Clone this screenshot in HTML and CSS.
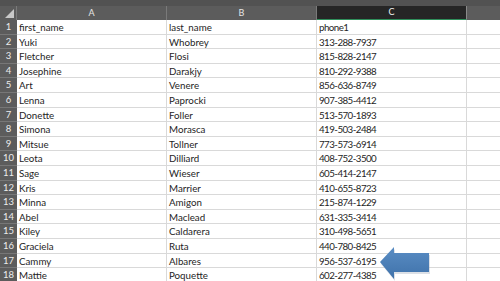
FILE: index.html
```html
<!DOCTYPE html>
<html lang="en">
<head>
  <meta charset="UTF-8" />
  <title>Contacts sheet</title>
  <link rel="stylesheet" href="styles.css">
</head>
<body>
  <div class="sheet">
    <div class="topbar"></div>
    <div class="grid" id="grid">
      <div class="corner"><span class="tri"></span></div>
      <div class="col-head">A</div>
      <div class="col-head">B</div>
      <div class="col-head selected">C</div>
      <div class="col-head last"></div>
    </div>

    <svg class="arrow" width="60" height="40" viewBox="0 0 60 40">
      <defs>
        <linearGradient id="arrowFill" x1="0" y1="0" x2="0" y2="1">
          <stop offset="0" stop-color="#5a8dc4" />
          <stop offset="1" stop-color="#3f72aa" />
        </linearGradient>
      </defs>
      <polygon points="2,16 16,1 16,7 51,7 51,26 16,26 16,33" fill="#9aa7b6" opacity="0.35" transform="translate(1,2)" />
      <polygon points="2,16 16,1 16,7 51,7 51,26 16,26 16,33" fill="url(#arrowFill)" />
    </svg>
  </div>

  <script>
    const rows = [
      ['first_name', 'last_name', 'phone1'],
      ['Yuki', 'Whobrey', '313-288-7937'],
      ['Fletcher', 'Flosi', '815-828-2147'],
      ['Josephine', 'Darakjy', '810-292-9388'],
      ['Art', 'Venere', '856-636-8749'],
      ['Lenna', 'Paprocki', '907-385-4412'],
      ['Donette', 'Foller', '513-570-1893'],
      ['Simona', 'Morasca', '419-503-2484'],
      ['Mitsue', 'Tollner', '773-573-6914'],
      ['Leota', 'Dilliard', '408-752-3500'],
      ['Sage', 'Wieser', '605-414-2147'],
      ['Kris', 'Marrier', '410-655-8723'],
      ['Minna', 'Amigon', '215-874-1229'],
      ['Abel', 'Maclead', '631-335-3414'],
      ['Kiley', 'Caldarera', '310-498-5651'],
      ['Graciela', 'Ruta', '440-780-8425'],
      ['Cammy', 'Albares', '956-537-6195'],
      ['Mattie', 'Poquette', '602-277-4385']
    ];

    const grid = document.getElementById('grid');
    rows.forEach((row, index) => {
      let html = `<div class="row-head">${index + 1}</div>`;
      html += `<div class="cell">${row[0]}</div>`;
      html += `<div class="cell">${row[1]}</div>`;
      html += `<div class="cell phone">${row[2]}</div>`;
      html += `<div class="cell last"></div>`;
      grid.insertAdjacentHTML('beforeend', html);
    });
  </script>
</body>
</html>
```

FILE: styles.css
```css
body {
  margin: 0;
  background: #ffffff;
  font-family: Lato, "Open Sans", sans-serif;
}
.sheet {
  position: relative;
  width: 500px;
  height: 281px;
  overflow: hidden;
}
.topbar {
  height: 6px;
  background: #525252;
}
.grid {
  display: grid;
  grid-template-columns: 17px 150px 150px 150px 1fr;
  grid-auto-rows: 14.6px;
  grid-template-rows: 14px;
}
.corner {
  position: relative;
  background: #5c5c5c;
  border-right: 1px solid #7a7a7a;
}
.tri {
  position: absolute;
  right: 2px;
  bottom: 2px;
  width: 0;
  height: 0;
  border-left: 9px solid transparent;
  border-bottom: 9px solid #c8c8c8;
}
.col-head {
  background: #5c5c5c;
  color: #e6e6e6;
  font-size: 9px;
  text-align: center;
  line-height: 13px;
  border-right: 1px solid #7a7a7a;
}
.col-head.selected {
  background: #262626;
  color: #f0f0f0;
  border-bottom: 1px solid #2f8f5b;
  line-height: 12px;
  border-right: 1px solid #8a8a8a;
}
.col-head.last {
  border-right: none;
}
.row-head {
  background: #5c5c5c;
  color: #ececec;
  font-size: 9.5px;
  text-align: center;
  line-height: 14px;
  border-bottom: 1px solid #777777;
  box-sizing: border-box;
}
.cell {
  font-size: 9.75px;
  color: #1e1e1e;
  padding-left: 2px;
  line-height: 14px;
  white-space: nowrap;
  overflow: hidden;
  border-right: 1px solid #d9d9d9;
  border-bottom: 1px solid #d9d9d9;
  box-sizing: border-box;
}
.cell.phone {
  letter-spacing: -0.55px;
}
.cell.last {
  border-right: none;
}
.arrow {
  position: absolute;
  left: 378px;
  top: 246px;
}
```
